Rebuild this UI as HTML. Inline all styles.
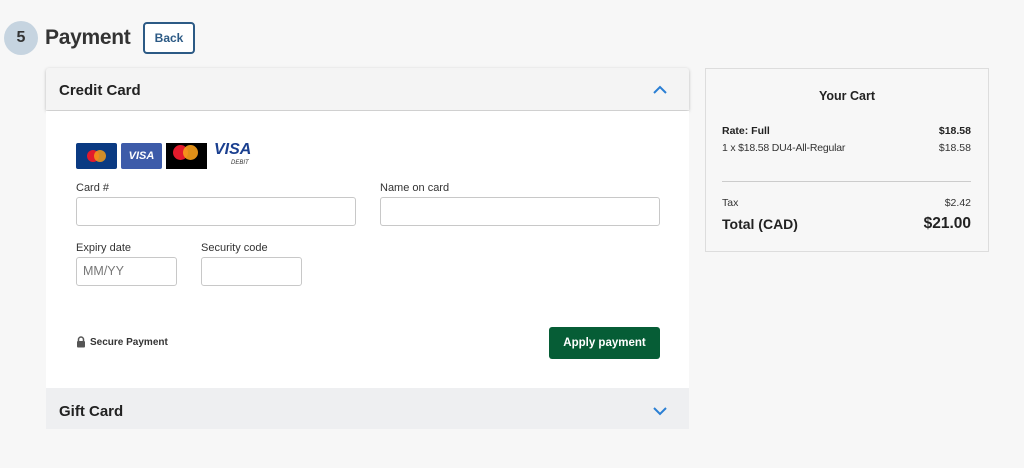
<!DOCTYPE html>
<html><head><style>
*{box-sizing:border-box;margin:0;padding:0}
body{width:1024px;height:468px;background:#f7f7f7;font-family:"Liberation Sans",sans-serif;color:#222;position:relative;overflow:hidden}
.a{position:absolute}
.inp{position:absolute;height:29px;background:#fff;border:1px solid #c8c8c8;border-radius:3px;font-size:12.5px;color:#777;padding:6px 6px}
.lbl{position:absolute;font-size:11px;color:#333}
</style></head><body>
<div class="a" style="left:4px;top:21px;width:34px;height:34px;border-radius:50%;background:#c6d4e0;font-weight:bold;font-size:16px;text-align:center;line-height:34px;color:#333">5</div>
<div class="a" style="left:45px;top:26px;font-size:21px;font-weight:bold;color:#333;letter-spacing:-0.3px">Payment</div>
<div class="a" style="left:143px;top:22px;width:52px;height:32px;border:2px solid #2c5a85;border-radius:4px;background:#fff;font-size:12px;font-weight:bold;color:#2c5a85;text-align:center;line-height:28px">Back</div>

<div class="a" style="left:46px;top:68px;width:643px;height:42px;background:#f4f4f4;box-shadow:0 1px 3px rgba(0,0,0,.25);border-radius:3px 3px 0 0"></div>
<div class="a" style="left:59px;top:82px;font-size:15px;font-weight:bold;color:#222">Credit Card</div>
<svg class="a" style="left:652px;top:85px" width="16" height="10"><path d="M2 8 L8 2 L14 8" fill="none" stroke="#2a7fd4" stroke-width="2"/></svg>
<div class="a" style="left:46px;top:111px;width:643px;height:277px;background:#fff"></div>

<div class="a" style="left:76px;top:143px;width:41px;height:26px;background:#0a3a82;border-radius:2px"><div class="a" style="left:11px;top:7px;width:12px;height:12px;border-radius:50%;background:#e21b2c"></div><div class="a" style="left:18px;top:7px;width:12px;height:12px;border-radius:50%;background:#f59c1a;opacity:.85"></div></div>
<div class="a" style="left:121px;top:143px;width:41px;height:26px;background:#3d5ba9;border-radius:2px;color:#fff;font-weight:bold;font-style:italic;font-size:11px;text-align:center;line-height:26px">VISA</div>
<div class="a" style="left:166px;top:143px;width:41px;height:26px;background:#000"><div class="a" style="left:7px;top:2px;width:15px;height:15px;border-radius:50%;background:#e21b2c"></div><div class="a" style="left:17px;top:2px;width:15px;height:15px;border-radius:50%;background:#f79e1b;opacity:.9"></div></div>
<div class="a" style="left:214px;top:141px;font-weight:bold;font-style:italic;font-size:16px;color:#1a3f8f">VISA</div>
<div class="a" style="left:231px;top:160px;font-size:6px;color:#333;font-style:italic">DEBIT</div>

<div class="lbl" style="left:76px;top:182px">Card #</div>
<div class="inp" style="left:76px;top:197px;width:280px"></div>
<div class="lbl" style="left:380px;top:182px">Name on card</div>
<div class="inp" style="left:380px;top:197px;width:280px"></div>
<div class="lbl" style="left:76px;top:242px">Expiry date</div>
<div class="inp" style="left:76px;top:257px;width:101px">MM/YY</div>
<div class="lbl" style="left:201px;top:242px">Security code</div>
<div class="inp" style="left:201px;top:257px;width:101px"></div>

<svg class="a" style="left:76px;top:336px" width="10" height="12"><path d="M2.5 5V3.5a2.5 2.5 0 0 1 5 0V5" fill="none" stroke="#555" stroke-width="1.5"/><rect x="1" y="5" width="8" height="6.5" rx="1" fill="#555"/></svg>
<div class="a" style="left:90px;top:337px;font-size:10px;font-weight:bold;color:#333">Secure Payment</div>
<div class="a" style="left:549px;top:327px;width:111px;height:32px;background:#065d36;border-radius:3px;color:#fff;font-size:11.5px;font-weight:bold;text-align:center;line-height:32px">Apply payment</div>

<div class="a" style="left:46px;top:388px;width:643px;height:41px;background:#eeeff1"></div>
<div class="a" style="left:59px;top:403px;font-size:15px;font-weight:bold;color:#222">Gift Card</div>
<svg class="a" style="left:652px;top:406px" width="16" height="10"><path d="M2 2 L8 8 L14 2" fill="none" stroke="#2a7fd4" stroke-width="2"/></svg>

<div class="a" style="left:705px;top:68px;width:284px;height:184px;border:1px solid #ddd;background:#f7f7f7"></div>
<div class="a" style="left:705px;top:89px;width:284px;text-align:center;font-size:12.5px;font-weight:bold;color:#222">Your Cart</div>
<div class="a" style="left:722px;top:125px;font-size:10.5px;font-weight:bold">Rate: Full</div>
<div class="a" style="left:900px;top:125px;width:71px;text-align:right;font-size:10.5px;font-weight:bold">$18.58</div>
<div class="a" style="left:722px;top:142px;font-size:10.5px;color:#333;letter-spacing:-0.2px">1 x $18.58 DU4-All-Regular</div>
<div class="a" style="left:900px;top:142px;width:71px;text-align:right;font-size:10.5px;color:#333">$18.58</div>
<div class="a" style="left:722px;top:181px;width:249px;height:1px;background:#ccc"></div>
<div class="a" style="left:722px;top:197px;font-size:10.5px;color:#333">Tax</div>
<div class="a" style="left:900px;top:197px;width:71px;text-align:right;font-size:10.5px;color:#333">$2.42</div>
<div class="a" style="left:722px;top:216px;font-size:14px;font-weight:bold">Total (CAD)</div>
<div class="a" style="left:880px;top:215px;width:91px;text-align:right;font-size:15.5px;font-weight:bold">$21.00</div>
</body></html>
